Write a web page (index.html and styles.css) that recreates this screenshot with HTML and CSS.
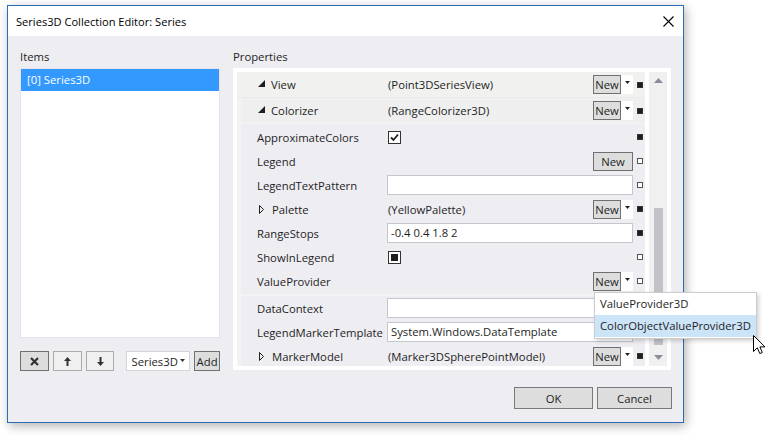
FILE: index.html
```html
<!DOCTYPE html>
<html>
<head>
<meta charset="utf-8">
<link rel="stylesheet" href="styles.css">
</head>
<body>
<div class="window">
  <div class="titlebar">
    <span class="title">Series3D Collection Editor: Series</span>
    <svg class="close" width="11" height="11" viewBox="0 0 11 11"><path d="M0.5 0.5L10.5 10.5M10.5 0.5L0.5 10.5" stroke="#000" stroke-width="1.1" fill="none"/></svg>
  </div>
  <div class="body">
    <div class="main">
      <div class="left">
        <div class="label">Items</div>
        <div class="list"><div class="item sel">[0] Series3D</div></div>
        <div class="lbtns">
          <div class="ib dark"><svg width="9" height="9" viewBox="0 0 9 9"><path d="M1 1L8 8M8 1L1 8" stroke="#333" stroke-width="2.2"/></svg></div>
          <div class="ib"><svg width="7" height="9" viewBox="0 0 7 9"><path d="M3.5 0L7 4H4.5V9H2.5V4H0Z" fill="#333"/></svg></div>
          <div class="ib"><svg width="7" height="9" viewBox="0 0 7 9"><path d="M3.5 9L7 5H4.5V0H2.5V5H0Z" fill="#333"/></svg></div>
          <div class="combo"><span>Series3D</span><svg width="5" height="3" viewBox="0 0 5 3"><path d="M0 0H5L2.5 3Z" fill="#333"/></svg></div>
          <div class="add">Add</div>
        </div>
      </div>
      <div class="right">
        <div class="label">Properties</div>
        <div class="grid">
          <div class="rows">
            <div class="row top">
              <div class="nm"><svg class="exp" width="7" height="7" viewBox="0 0 7 7"><path d="M7 0V7H0Z" fill="#1e1e1e"/></svg>View</div>
              <div class="vl"><span class="vt">(Point3DSeriesView)</span><div class="nw"><div class="new">New</div><div class="dd"><svg width="5" height="3" viewBox="0 0 5 3"><path d="M0 0H5L2.5 3Z" fill="#222"/></svg></div></div></div>
              <div class="mk"><div class="sq"></div></div>
            </div>
            <div class="children">
              <div class="row sub">
                <div class="nm"><svg class="exp" width="7" height="7" viewBox="0 0 7 7"><path d="M7 0V7H0Z" fill="#1e1e1e"/></svg>Colorizer</div>
                <div class="vl"><span class="vt">(RangeColorizer3D)</span><div class="nw"><div class="new">New</div><div class="dd"><svg width="5" height="3" viewBox="0 0 5 3"><path d="M0 0H5L2.5 3Z" fill="#222"/></svg></div></div></div>
                <div class="mk"><div class="sq"></div></div>
              </div>
              <div class="group">
                <div class="row">
                  <div class="nm">ApproximateColors</div>
                  <div class="vl"><div class="cb"><svg width="11" height="11" viewBox="0 0 11 11"><path d="M2 5.5L4.5 8L9 2.5" stroke="#1e1e1e" stroke-width="1.8" fill="none"/></svg></div></div>
                  <div class="mk"><div class="sq"></div></div>
                </div>
                <div class="row">
                  <div class="nm">Legend</div>
                  <div class="vl"><div class="nw"><div class="new wide">New</div></div></div>
                  <div class="mk"><div class="sq o"></div></div>
                </div>
                <div class="row">
                  <div class="nm">LegendTextPattern</div>
                  <div class="vl"><div class="tb"></div></div>
                  <div class="mk"><div class="sq o"></div></div>
                </div>
                <div class="row">
                  <div class="nm tri"><svg class="col" width="5" height="9" viewBox="0 0 5 9"><path d="M0.5 0.5L4.5 4.5L0.5 8.5Z" stroke="#1e1e1e" stroke-width="1" fill="none"/></svg>Palette</div>
                  <div class="vl"><span class="vt">(YellowPalette)</span><div class="nw"><div class="new">New</div><div class="dd"><svg width="5" height="3" viewBox="0 0 5 3"><path d="M0 0H5L2.5 3Z" fill="#222"/></svg></div></div></div>
                  <div class="mk"><div class="sq"></div></div>
                </div>
                <div class="row">
                  <div class="nm">RangeStops</div>
                  <div class="vl"><div class="tb">-0.4 0.4 1.8 2</div></div>
                  <div class="mk"><div class="sq"></div></div>
                </div>
                <div class="row">
                  <div class="nm">ShowInLegend</div>
                  <div class="vl"><div class="cb"><div class="ind"></div></div></div>
                  <div class="mk"><div class="sq o"></div></div>
                </div>
                <div class="row">
                  <div class="nm">ValueProvider</div>
                  <div class="vl"><div class="nw"><div class="new">New</div><div class="dd"><svg width="5" height="3" viewBox="0 0 5 3"><path d="M0 0H5L2.5 3Z" fill="#222"/></svg></div></div></div>
                  <div class="mk"><div class="sq o"></div></div>
                </div>
              </div>
              <div class="row">
                <div class="nm">DataContext</div>
                <div class="vl"><div class="tb"></div></div>
                <div class="mk"><div class="sq o"></div></div>
              </div>
              <div class="row">
                <div class="nm">LegendMarkerTemplate</div>
                <div class="vl"><div class="tb">System.Windows.DataTemplate</div></div>
                <div class="mk"><div class="sq o"></div></div>
              </div>
              <div class="row">
                <div class="nm tri"><svg class="col" width="5" height="9" viewBox="0 0 5 9"><path d="M0.5 0.5L4.5 4.5L0.5 8.5Z" stroke="#1e1e1e" stroke-width="1" fill="none"/></svg>MarkerModel</div>
                <div class="vl"><span class="vt">(Marker3DSpherePointModel)</span><div class="nw"><div class="new">New</div><div class="dd"><svg width="5" height="3" viewBox="0 0 5 3"><path d="M0 0H5L2.5 3Z" fill="#222"/></svg></div></div></div>
                <div class="mk"><div class="sq"></div></div>
              </div>
            </div>
          </div>
          <div class="sbar">
            <div class="sarrow"><svg width="9" height="5" viewBox="0 0 9 5"><path d="M0 5L4.5 0L9 5Z" fill="#8a8e99"/></svg></div>
            <div class="track"><div class="thumb"></div></div>
            <div class="sarrow"><svg width="9" height="5" viewBox="0 0 9 5"><path d="M0 0L4.5 5L9 0Z" fill="#8a8e99"/></svg></div>
          </div>
        </div>
      </div>
    </div>
    <div class="footer">
      <div class="btn ok">OK</div>
      <div class="btn cancel">Cancel</div>
    </div>
  </div>
</div>
<div class="popup">
  <div class="pi">ValueProvider3D</div>
  <div class="pi hi">ColorObjectValueProvider3D</div>
</div>
<svg class="cursor" width="13" height="20" viewBox="0 0 13 20"><path d="M0.5 0.5V16.5L4.3 12.8L6.8 18.6L9.3 17.5L6.9 11.9H12Z" fill="#fff" stroke="#000" stroke-width="1" stroke-linejoin="round"/></svg>
</body>
</html>
```

FILE: styles.css
```css
html, body {
  margin: 0;
  padding: 0;
}
body {
  background: #ffffff;
  font-family: "Open Sans", "Noto Sans", sans-serif;
  font-size: 11.3px;
  color: #1e1e1e;
  width: 771px;
  height: 438px;
  overflow: hidden;
  position: relative;
}
.window {
  margin: 5px 0 0 7px;
  width: 677px;
  height: 418px;
  box-sizing: border-box;
  border: 1px solid #2b6cb3;
  box-shadow: 2px 3px 10px rgba(0, 0, 0, 0.3);
  display: flex;
  flex-direction: column;
  background: #eeedf2;
}
.titlebar {
  height: 30px;
  flex: none;
  background: #fff;
  display: flex;
  align-items: center;
  justify-content: space-between;
  padding: 0 9px 0 8px;
}
.title {
  font-size: 11.1px;
  color: #000;
}
.body {
  flex: 1;
  display: flex;
  flex-direction: column;
}
.main {
  display: flex;
  gap: 13px;
  padding: 12px 0 0 12px;
  height: 323px;
}
.left {
  width: 200px;
  display: flex;
  flex-direction: column;
}
.label {
  height: 20px;
  line-height: 18px;
}
.list {
  height: 270px;
  box-sizing: border-box;
  background: #fff;
  border: 1px solid #e4e3ea;
}
.item {
  height: 22px;
  line-height: 22px;
  padding-left: 6px;
}
.item.sel {
  background: #3399ff;
  color: #fff;
}
.lbtns {
  margin-top: 13px;
  height: 20px;
  display: flex;
}
.ib {
  width: 29px;
  height: 20px;
  box-sizing: border-box;
  border: 1px solid #adadad;
  background: #f0f0f0;
  display: flex;
  align-items: center;
  justify-content: center;
  margin-right: 4px;
}
.ib.dark {
  border-color: #707070;
  background: #dddddd;
}
.combo {
  margin-left: 8px;
  width: 64px;
  height: 20px;
  box-sizing: border-box;
  border: 1px solid #d3d3d8;
  background: #fff;
  display: flex;
  align-items: center;
  justify-content: space-between;
  padding: 0 4px 0 4px;
}
.combo svg {
  margin-bottom: 2px;
}
.add {
  margin-left: 4px;
  width: 26px;
  height: 20px;
  box-sizing: border-box;
  border: 1px solid #707070;
  background: #dddddd;
  display: flex;
  align-items: center;
  justify-content: center;
}
.right {
  width: 438px;
  display: flex;
  flex-direction: column;
}
.grid {
  height: 302px;
  box-sizing: border-box;
  background: #fff;
  padding: 4px;
  display: flex;
  gap: 4px;
}
.rows {
  width: 408px;
  height: 294px;
  overflow: hidden;
  background: #f3f3f3;
}
.row {
  display: flex;
  align-items: center;
  height: 24px;
  background: #eeedf2;
}
.row.top {
  height: 25px;
  background: #f1f2f0;
  border-bottom: 1px solid #eae9ee;
}
.row.sub {
  height: 25px;
  background: #efefef;
  border-bottom: 1px solid #f4f4f4;
}
.children {
  margin-left: 4px;
  background: #eeedf2;
}
.group {
  padding: 1px 0 1px 0;
  border-bottom: 2px solid #f3f3f3;
}
.nm {
  flex: none;
  width: 146px;
  box-sizing: border-box;
  padding-left: 16px;
  white-space: nowrap;
  display: flex;
  align-items: center;
}
.row.top .nm {
  width: 150px;
  padding-left: 21px;
}
.row.sub .nm {
  padding-left: 17px;
}
.exp {
  margin-right: 6px;
  margin-bottom: 2px;
}
.nm.tri {
  padding-left: 18px;
}
.col {
  margin-right: 8px;
}
.vl {
  flex: 1;
  min-width: 0;
  display: flex;
  align-items: center;
  height: 100%;
}
.vt {
  padding-left: 1px;
  white-space: nowrap;
}
.mk {
  flex: none;
  width: 12px;
  box-sizing: border-box;
  padding-left: 4px;
  display: flex;
  align-items: center;
}
.sq {
  width: 6px;
  height: 6px;
  box-sizing: border-box;
  background: #1e1e1e;
  border: 1px solid #333;
}
.sq.o {
  background: #fff;
  border-color: #555;
}
.tb {
  width: 100%;
  height: 20px;
  box-sizing: border-box;
  border: 1px solid #c6c6cf;
  background: #fff;
  padding-left: 3px;
  line-height: 18px;
  white-space: nowrap;
  overflow: hidden;
}
.nw {
  margin-left: auto;
  display: flex;
  height: 19px;
}
.new {
  width: 28px;
  box-sizing: border-box;
  border: 1px solid #707070;
  background: #dddddd;
  display: flex;
  align-items: center;
  justify-content: center;
}
.new.wide {
  width: 40px;
}
.dd {
  width: 12px;
  background: #fff;
  display: flex;
  justify-content: center;
  align-items: flex-start;
  padding-top: 6px;
  box-sizing: border-box;
}
.cb {
  margin-left: 1px;
  width: 13px;
  height: 13px;
  box-sizing: border-box;
  border: 1px solid #333;
  background: #fff;
  display: flex;
  align-items: center;
  justify-content: center;
}
.ind {
  width: 7px;
  height: 7px;
  background: #1e1e1e;
}
.sbar {
  width: 18px;
  background: #f0f0f0;
  display: flex;
  flex-direction: column;
}
.sarrow {
  height: 17px;
  flex: none;
  display: flex;
  align-items: center;
  justify-content: center;
}
.track {
  flex: 1;
  display: flex;
  justify-content: center;
}
.thumb {
  margin-top: 119px;
  width: 9px;
  height: 137px;
  background: #c2c3c9;
}
.footer {
  display: flex;
  justify-content: flex-end;
  gap: 4px;
  padding: 16px 11px 0 0;
}
.btn {
  height: 22px;
  box-sizing: border-box;
  border: 1px solid #7a7a7a;
  background: #dddddd;
  display: flex;
  align-items: center;
  justify-content: center;
}
.btn.ok {
  width: 79px;
}
.btn.cancel {
  width: 75px;
}
.popup {
  position: absolute;
  left: 594px;
  top: 292px;
  width: 163px;
  box-sizing: border-box;
  border: 1px solid #cccccc;
  background: #fff;
  box-shadow: 2px 2px 4px rgba(0, 0, 0, 0.18);
  padding-bottom: 1px;
}
.pi {
  height: 22px;
  line-height: 22px;
  padding-left: 5px;
  white-space: nowrap;
}
.pi.hi {
  background: #cce4f7;
}
.cursor {
  position: absolute;
  left: 753px;
  top: 335px;
}
```
